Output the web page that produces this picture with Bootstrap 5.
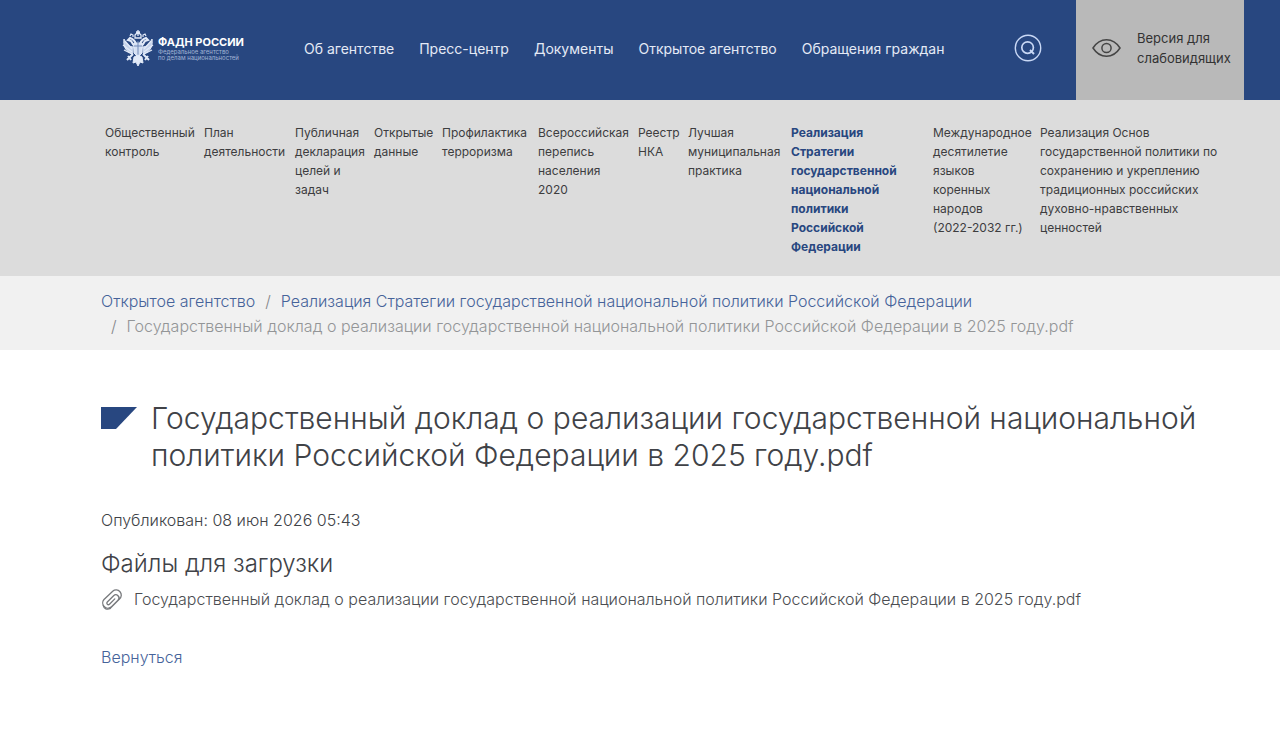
<!DOCTYPE html>
<html lang="ru">
<head>
<meta charset="utf-8">
<meta name="viewport" content="width=device-width, initial-scale=1">
<title>ФАДН России</title>
<link href="https://cdn.jsdelivr.net/npm/bootstrap@5.3.0/dist/css/bootstrap.min.css" rel="stylesheet">
<style>
  :root { --brand: #284780; --gutter: 101px; }
  body { font-family: Inter, Roboto, sans-serif; font-size: 16px; line-height: 25px; font-weight: 300; color: #404247; }
  a { color: #46639a; text-decoration: none; }
  a:hover { text-decoration: underline; }
  .site-header { background: var(--brand); min-height: 100px; padding-right: 36px; }
  .site-logo { margin-left: 121px; width: 152px; gap: 3px; color: #fff; }
  .logo-title { font-size: 11px; line-height: 14px; font-weight: 700; }
  .logo-note { font-size: 6px; line-height: 6px; font-weight: 400; color: #a3b5d6; }
  .main-links { gap: 25px; margin-left: 31px; font-size: 14px; font-weight: 400; }
  .main-links .nav-link { padding: 0; color: #e4eaf6; }
  .search-btn { margin-right: 34px; line-height: 0; }
  .vision-btn { background: #b9b9b9; width: 168px; padding: 0 0 4px 16px; gap: 16px; font-size: 13px; line-height: 20px; color: #333; font-weight: 400; border-radius: 0; }
  .vision-btn:hover { background: #adadad; }
  .sub-menu { background: #dcdcdc; padding: 23px 36px 20px 105px; font-size: 12px; line-height: 19px; font-weight: 400;
    display: grid; grid-template-columns: 99fr 91fr 79fr 68fr 96fr 100fr 50fr 103fr 142fr 107fr 204fr; }
  .sub-menu a { color: #3d3d3f; padding-right: 6px; }
  .sub-menu a.active { color: var(--brand); font-weight: 700; padding-right: 30px; }
  .crumbs-bar { background: #f1f1f1; padding: 13px 100px 11px var(--gutter); }
  .crumbs-bar .breadcrumb { --bs-breadcrumb-divider-color: #85878a; --bs-breadcrumb-item-active-color: #939597; --bs-breadcrumb-item-padding-x: 10px; }
  .page-body { padding: 50px 36px 40px var(--gutter); }
  .page-title { font-size: 30px; line-height: 37px; font-weight: 300; gap: 14px; margin-bottom: 34px; }
  .title-mark { margin-top: 7px; }
  .files-title { font-size: 24px; line-height: 30px; font-weight: 300; margin: 16px 0 8px; }
  .file-link { color: #4b4d51; gap: 11px; margin-bottom: 33px; }
</style>
</head>
<body>
<header class="site-header d-flex align-items-stretch">
  <a href="#" class="site-logo d-flex align-items-center flex-shrink-0 pb-1">
    <svg width="34" height="39" viewBox="0 0 34 39" fill="none" stroke="#e2eaf8" aria-hidden="true">
      <path d="M17 1v6M15 3h4M14 6l3-3 3 3v3h-6z" stroke-width="1.3"/>
      <path d="M15 15c-1-3-3-5-6-6l-2 2 3 1c1 2 2 4 4 5M19 15c1-3 3-5 6-6l2 2-3 1c-1 2-2 4-4 5" stroke-width="2"/>
      <path d="M9 7l1-2 2 1v2M25 7l-1-2-2 1v2" stroke-width="1.2"/>
      <path d="M13 18C8 18 5 15 3 10c-1 6 1 13 9 15M21 18c5 0 8-3 10-8 1 6-1 13-9 15" fill="#c6d4ec" stroke-width="1"/>
      <path d="M4 12l7 8M2 16l9 7M3 21l8 4M30 12l-7 8M32 16l-9 7M31 21l-8 4" stroke-width="1.3"/>
      <path d="M13 14h8v10l-4 4-4-4z" fill="#d5e0f3" stroke-width="1"/>
      <path d="M17 12v20M13 17h8" stroke="#7189b8" stroke-width="1"/>
      <path d="M12 25l-6 6M22 25l6 6M7 27l3 4M27 27l-3 4" stroke-width="2"/>
      <path d="M13 28l4-2 4 2 1 6-3-1-2 4-2-4-3 1z" fill="#e2eaf8"/>
    </svg>
    <span class="d-flex flex-column text-nowrap">
      <span class="logo-title">ФАДН РОССИИ</span>
      <span class="logo-note">Федеральное агентство<br>по делам национальностей</span>
    </span>
  </a>
  <nav class="main-links nav align-items-center flex-nowrap text-nowrap pb-1" aria-label="Главное меню">
    <a class="nav-link" href="#">Об агентстве</a>
    <a class="nav-link" href="#">Пресс-центр</a>
    <a class="nav-link" href="#">Документы</a>
    <a class="nav-link" href="#">Открытое агентство</a>
    <a class="nav-link" href="#">Обращения граждан</a>
  </nav>
  <button type="button" class="search-btn btn border-0 p-0 pb-1 ms-auto" aria-label="Поиск">
    <svg width="28" height="28" viewBox="0 0 28 28" fill="none" stroke="#c9d8f5" stroke-width="1.4">
      <circle cx="14" cy="14" r="12.700"/><circle cx="13.600" cy="13.600" r="5.800" stroke-width="1.7"/><path d="M16 16l4 4" stroke-width="1.9"/>
    </svg>
  </button>
  <button type="button" class="vision-btn btn border-0 d-flex align-items-center text-start flex-shrink-0">
    <svg class="flex-shrink-0" width="29" height="20" viewBox="0 0 29 20" fill="none" stroke="#454545" stroke-width="1.5" aria-hidden="true">
      <path d="M1 10C8-1 21-1 28 10 21 21 8 21 1 10z"/><circle cx="14.500" cy="10" r="4.600"/>
    </svg>
    <span>Версия для<br>слабовидящих</span>
  </button>
</header>

<nav class="sub-menu" aria-label="Открытое агентство">
  <a href="#">Общественный контроль</a>
  <a href="#">План деятельности</a>
  <a href="#">Публичная декларация целей и задач</a>
  <a href="#">Открытые данные</a>
  <a href="#">Профилактика терроризма</a>
  <a href="#">Всероссийская перепись населения 2020</a>
  <a href="#">Реестр НКА</a>
  <a href="#">Лучшая муниципальная практика</a>
  <a href="#" class="active" aria-current="true">Реализация Стратегии государственной национальной политики Российской Федерации</a>
  <a href="#">Международное десятилетие языков коренных народов <span class="text-nowrap">(2022-2032 гг.)</span></a>
  <a href="#">Реализация Основ государственной политики по сохранению и укреплению традиционных российских духовно-нравственных ценностей</a>
</nav>

<nav class="crumbs-bar" aria-label="Навигационная цепочка">
  <ol class="breadcrumb mb-0">
    <li class="breadcrumb-item"><a href="#">Открытое агентство</a></li>
    <li class="breadcrumb-item"><a href="#">Реализация Стратегии государственной национальной политики Российской Федерации</a></li>
    <li class="breadcrumb-item active" aria-current="page">Государственный доклад о реализации государственной национальной политики Российской Федерации в 2025 году.pdf</li>
  </ol>
</nav>

<main class="page-body">
  <h1 class="page-title d-flex align-items-start">
    <svg class="title-mark flex-shrink-0" width="36" height="22" viewBox="0 0 36 22" aria-hidden="true"><path d="M0 0h36L15 22H0z" fill="#284780"/></svg>
    <span>Государственный доклад о реализации государственной национальной политики Российской Федерации в 2025 году.pdf</span>
  </h1>
  <p class="mb-0">Опубликован: 08 июн 2026 05:43</p>
  <h2 class="files-title">Файлы для загрузки</h2>
  <a href="#" class="file-link d-flex align-items-center">
    <svg class="flex-shrink-0" width="22" height="22" viewBox="0 0 22 22" fill="none" stroke="#77797c" stroke-width="1.3" stroke-linecap="round" aria-hidden="true">
      <path d="M9 19.500l9.500-9.500a4.800 4.800 0 0 0-6.800-7.800L3 10.500a5.200 5.200 0 0 0 7 7.600l7-7a3.100 3.100 0 0 0-4.400-4.400l-6.300 6.300a1.500 1.500 0 0 0 2.200 2.200l5.300-5.300"/>
      <path d="M2.200 16.500a4.500 4.500 0 0 0 6.800 3"/>
    </svg>
    <span>Государственный доклад о реализации государственной национальной политики Российской Федерации в 2025 году.pdf</span>
  </a>
  <a href="#">Вернуться</a>
</main>
<script src="https://cdn.jsdelivr.net/npm/bootstrap@5.3.0/dist/js/bootstrap.bundle.min.js"></script>
</body>
</html>
